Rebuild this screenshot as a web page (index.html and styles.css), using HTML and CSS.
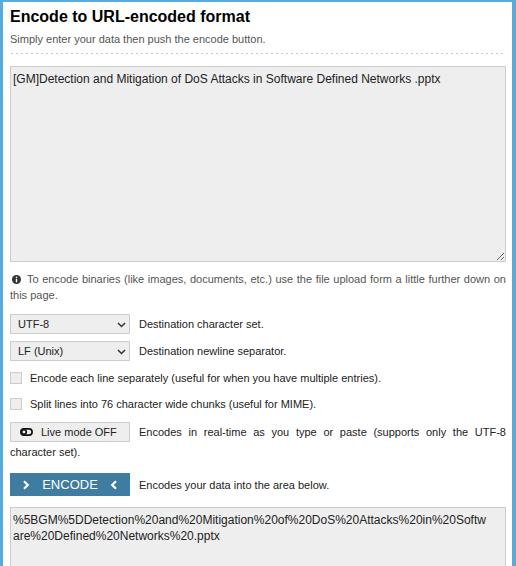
FILE: index.html
```html
<!DOCTYPE html>
<html lang="en">
<head>
<meta charset="utf-8">
<title>Encode to URL-encoded format</title>
<link rel="stylesheet" href="styles.css">
</head>
<body>
<div class="frame">
  <h1 class="title">Encode to URL-encoded format</h1>
  <p class="subtitle">Simply enter your data then push the encode button.</p>
  <div class="sep"></div>
  <textarea class="area area-in" spellcheck="false">[GM]Detection and Mitigation of DoS Attacks in Software Defined Networks .pptx</textarea>
  <p class="info"><svg class="info-icon" width="9" height="9" viewBox="0 0 18 18"><circle cx="9" cy="9" r="9" fill="#333"/><rect x="7.6" y="7.5" width="2.8" height="7" fill="#fff"/><circle cx="9" cy="4.6" r="1.6" fill="#fff"/></svg>To encode binaries (like images, documents, etc.) use the file upload form a little further down on this page.</p>

  <div class="row row-first">
    <div class="select-wrap">
      <select class="select"><option>UTF-8</option></select>
      <svg class="chev" width="9" height="6" viewBox="0 0 9 6"><path d="M1 1 L4.5 4.5 L8 1" fill="none" stroke="#333" stroke-width="1.5"/></svg>
    </div>
    <span class="label">Destination character set.</span>
  </div>
  <div class="row">
    <div class="select-wrap">
      <select class="select"><option>LF (Unix)</option></select>
      <svg class="chev" width="9" height="6" viewBox="0 0 9 6"><path d="M1 1 L4.5 4.5 L8 1" fill="none" stroke="#333" stroke-width="1.5"/></svg>
    </div>
    <span class="label">Destination newline separator.</span>
  </div>

  <label class="cb-row cb-first"><span class="cb"></span><span class="cb-label">Encode each line separately (useful for when you have multiple entries).</span></label>
  <label class="cb-row"><span class="cb"></span><span class="cb-label">Split lines into 76 character wide chunks (useful for MIME).</span></label>

  <p class="live">
    <button class="live-btn" type="button"><svg class="toggle" width="13" height="8" viewBox="0 0 13 8"><rect x="0.9" y="0.9" width="11.2" height="6.2" rx="3.1" fill="none" stroke="#111" stroke-width="1.7"/><circle cx="4" cy="4" r="2.3" fill="none" stroke="#111" stroke-width="1.7"/></svg>Live mode OFF</button>Encodes in real-time as you type or paste (supports only the UTF-8 character set).
  </p>

  <div class="encode-row">
    <button class="encode-btn" type="button"><svg width="8" height="10" viewBox="0 0 8 10"><path d="M2 1.2 L5.8 5 L2 8.8" fill="none" stroke="#fff" stroke-width="2.2"/></svg><span>ENCODE</span><svg width="8" height="10" viewBox="0 0 8 10"><path d="M6 1.2 L2.2 5 L6 8.8" fill="none" stroke="#fff" stroke-width="2.2"/></svg></button>
    <span class="label">Encodes your data into the area below.</span>
  </div>

  <div class="area area-out">%5BGM%5DDetection%20and%20Mitigation%20of%20DoS%20Attacks%20in%20Software%20Defined%20Networks%20.pptx</div>
</div>
</body>
</html>
```
FILE: styles.css
```css
* { box-sizing: border-box; }
html, body { margin: 0; padding: 0; background: #fff; }
body {
  font-family: "Liberation Sans", Arial, Helvetica, sans-serif;
  font-size: 11px;
  color: #222;
}
.frame {
  width: 516px;
  height: 566px;
  overflow: hidden;
  border-top: 2px solid #5aabdc;
  border-left: 3px solid #5aabdc;
  border-right: 4px solid #5aabdc;
  padding: 0 6px 0 7px;
}
.title {
  margin: 0;
  padding-top: 4px;
  font-size: 16px;
  line-height: 22px;
  font-weight: bold;
  color: #000;
}
.subtitle {
  margin: 4px 0 0;
  line-height: 14px;
  color: #555;
}
.sep {
  margin: 7px 0 0 1px;
  height: 1px;
  background: repeating-linear-gradient(to right, #c8c8c8 0 2px, transparent 2px 5px);
}
.area {
  display: block;
  width: 100%;
  margin: 12px 0 0;
  border: 1px solid #ccc;
  border-radius: 0;
  background: #eee;
  font-family: "Liberation Sans", Arial, sans-serif;
  font-size: 12px;
  line-height: 16px;
  color: #222;
  padding: 4px 2px;
  resize: vertical;
  outline: none;
  overflow: hidden;
}
.area-in { height: 196px; }
.area-out {
  margin-top: 11px;
  height: 90px;
  padding: 4px 16px 4px 2px;
  word-break: break-all;
  overflow-wrap: anywhere;
}
.info {
  margin: 9px 0 0;
  line-height: 16px;
  color: #555;
  text-align: justify;
}
.info-icon {
  margin: 0 6px 0 2px;
  vertical-align: -1px;
}
.row {
  display: flex;
  align-items: center;
  margin-top: 7px;
}
.row-first { margin-top: 11px; }
.select-wrap {
  position: relative;
  flex: none;
  width: 120px;
  height: 20px;
}
.select {
  appearance: none;
  -webkit-appearance: none;
  display: block;
  width: 100%;
  height: 100%;
  margin: 0;
  border: 1px solid #ccc;
  border-radius: 0;
  background: #eee;
  font-family: "Liberation Sans", Arial, sans-serif;
  font-size: 11px;
  color: #222;
  padding: 0 0 0 7px;
  outline: none;
}
.chev {
  position: absolute;
  right: 4px;
  top: 8px;
  pointer-events: none;
}
.label { margin-left: 9px; }
.cb-row {
  display: flex;
  align-items: center;
  line-height: 16px;
  margin-top: 10px;
}
.cb-first { margin-top: 9px; }
.cb {
  flex: none;
  width: 12px;
  height: 12px;
  border: 1px solid #ccc;
  background: #eee;
}
.cb-label { margin-left: 8px; }
.live {
  margin: 10px 0 0;
  line-height: 20px;
  text-align: justify;
}
.live-btn {
  float: left;
  display: flex;
  align-items: center;
  width: 120px;
  height: 20px;
  margin: 0 9px 0 0;
  padding: 0 0 0 9px;
  border: 1px solid #ccc;
  border-radius: 0;
  background: #eee;
  font-family: "Liberation Sans", Arial, sans-serif;
  font-size: 11px;
  color: #222;
}
.toggle { margin-right: 8px; }
.encode-row {
  display: flex;
  align-items: center;
  margin-top: 11px;
}
.encode-btn {
  flex: none;
  display: flex;
  align-items: center;
  justify-content: space-between;
  width: 120px;
  height: 23px;
  margin: 0;
  padding: 0 12px 0 12px;
  border: none;
  border-radius: 0;
  background: #3f7ca1;
  color: #fff;
  font-family: "Liberation Sans", Arial, sans-serif;
  font-size: 13px;
}
.encode-btn span { line-height: 23px; }
```
